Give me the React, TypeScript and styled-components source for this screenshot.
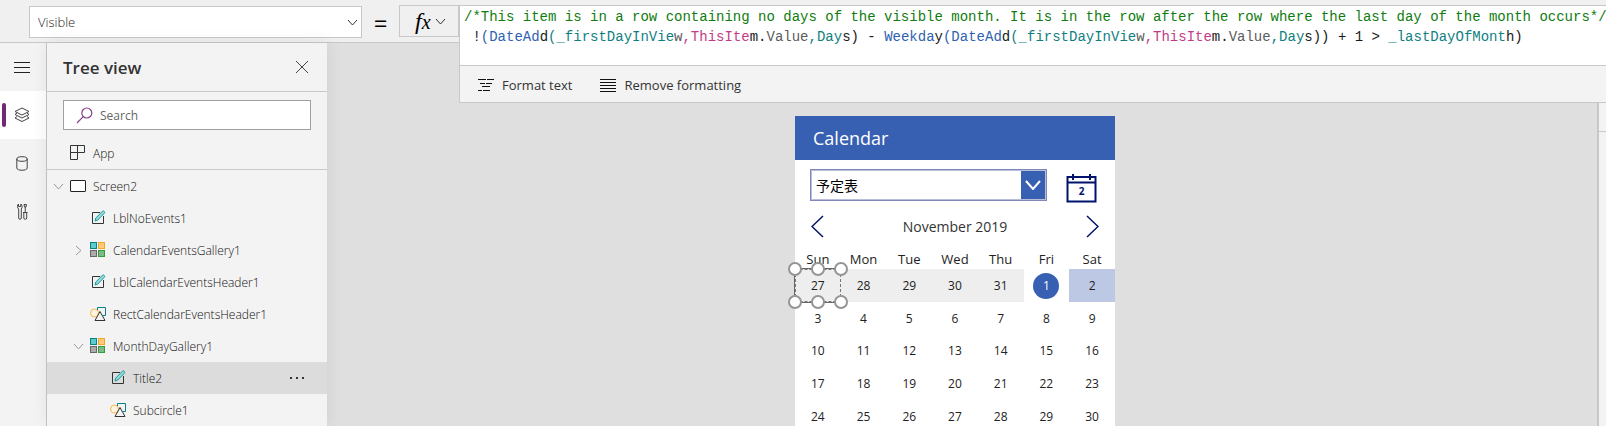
import React from "react";
import styled, { createGlobalStyle, css } from "styled-components";

const uiFont = '"Open Sans", "Noto Sans", sans-serif';
const appFont = '"Open Sans", "Noto Sans CJK JP", sans-serif';
const codeFont = '"Liberation Mono", monospace';

const line = "#c8c8c8";
const navy = "#00126b";
const blue = "#3860b2";

const GlobalStyle = createGlobalStyle`
  *, *::before, *::after { box-sizing: border-box; }
  body { margin: 0; font-family: ${uiFont}; color: #333; background: #f3f3f3; }
  button, input, select { font: inherit; color: inherit; margin: 0; }
  button { background: none; border: 0; padding: 0; cursor: pointer; }
  ul { list-style: none; margin: 0; padding: 0; }
  svg { display: block; flex: none; }
`;

const Studio = styled.div`
  display: flex;
  flex-direction: column;
  height: 100vh;
  overflow: hidden;
`;

/* ---------- formula bar ---------- */

const FormulaBar = styled.header`
  display: flex;
  align-items: flex-start;
  flex: none;
  height: 43px;
  padding-left: 29px;
  background: #f0f0f0;
  border-bottom: 1px solid ${line};
`;

const PropertyPicker = styled.label`
  display: grid;
  align-items: center;
  width: 333px;
  height: 32px;
  margin-top: 6px;
  background: #fff;
  border: 1px solid ${line};

  > * { grid-area: 1 / 1; }
  > svg { justify-self: end; margin-right: 3px; pointer-events: none; }
`;

const PropertySelect = styled.select`
  appearance: none;
  width: 100%;
  height: 100%;
  padding: 0 24px 0 8px;
  border: 0;
  background: transparent;
  font-size: 13px;
  font-weight: 300;
  color: #222;
`;

const Equals = styled.span`
  width: 37px;
  margin-top: 6px;
  text-align: center;
  font-size: 24px;
  line-height: 34px;
  color: #000;
`;

const FxButton = styled.button`
  display: flex;
  align-items: center;
  gap: 4px;
  width: 60px;
  height: 32px;
  margin-top: 5px;
  padding-left: 15px;
  border: 1px solid ${line};
`;

const Fx = styled.span`
  font: italic 24px/28px "Liberation Serif", serif;
  color: #000;

  small { font-size: 20px; }
`;

const EditorSlot = styled.div`
  position: relative;
  flex: 1;
  min-width: 0;
`;

const Editor = styled.section`
  position: absolute;
  z-index: 2;
  top: 5px;
  left: 0;
  right: 0;
  background: #fff;
  border: 1px solid ${line};
  border-right: 0;
`;

const Code = styled.div`
  height: 59px;
  padding: 1px 0 0 4px;
  overflow: hidden;
  white-space: pre;
  font-family: ${codeFont};
  font-size: 14px;
  line-height: 20px;
  color: #1a1a1a;
  outline: none;
`;

const tones = {
  comment: "#107c10",
  fn: "#2f62b0",
  variable: "#0f8080",
  item: "#c23b88",
  muted: "#5c5c5c",
  plain: "#1a1a1a",
};

const Token = styled.span<{ $tone: keyof typeof tones }>`
  color: ${(p) => tones[p.$tone]};
`;

const FormatBar = styled.div`
  display: flex;
  align-items: center;
  gap: 28px;
  height: 37px;
  padding: 2px 0 0 18px;
  background: #f3f3f3;
  border-top: 1px solid ${line};
`;

const FormatButton = styled.button`
  display: flex;
  align-items: center;
  gap: 8px;
  font-size: 13px;
`;

/* ---------- left side ---------- */

const Body = styled.div`
  display: flex;
  flex: 1;
  min-height: 0;
`;

const Rail = styled.nav`
  flex: none;
  width: 47px;
  background: #f3f3f3;
  border-right: 1px solid ${line};
`;

const RailButton = styled.button<{ $active?: boolean }>`
  position: relative;
  display: flex;
  align-items: center;
  justify-content: center;
  width: 100%;
  height: 48px;
  padding-right: 2px;
  color: #333;

  ${(p) =>
    p.$active &&
    css`
      background: #fff;

      &::before {
        content: "";
        position: absolute;
        left: 2px;
        top: 12px;
        width: 4px;
        height: 24px;
        border-radius: 2px;
        background: #742774;
      }
    `}
`;

const Panel = styled.aside`
  flex: none;
  width: 280px;
  background: #f3f3f3;
  box-shadow: 0 0 16px rgba(0, 0, 0, 0.08);
  z-index: 1;
`;

const PanelHeader = styled.div`
  display: flex;
  align-items: center;
  justify-content: space-between;
  height: 49px;
  padding: 0 18px 0 16px;
  border-bottom: 1px solid ${line};
`;

const PanelTitle = styled.h2`
  margin: 0;
  padding-top: 2px;
  font-size: 17px;
  line-height: 24px;
  font-weight: 600;
`;

const SearchBox = styled.label`
  display: flex;
  align-items: center;
  gap: 7px;
  height: 30px;
  margin: 8px 16px 7px;
  padding-left: 12px;
  background: #fff;
  border: 1px solid #a0a0a0;
`;

const SearchInput = styled.input`
  flex: 1;
  min-width: 0;
  padding: 0;
  border: 0;
  outline: 0;
  background: none;
  font-size: 12px;

  &::placeholder { color: #666; opacity: 1; }
`;

const TreeRow = styled.li<{ $depth: number; $selected?: boolean; $ruled?: boolean }>`
  display: flex;
  align-items: center;
  height: ${(p) => (p.$ruled ? 33 : 32)}px;
  padding-left: ${(p) => p.$depth * 20 + 3}px;
  padding-right: 22px;
  background: ${(p) => (p.$selected ? "#dcdcdc" : "transparent")};
  border-bottom: ${(p) => (p.$ruled ? `1px solid ${line}` : "0")};
`;

const Twisty = styled.button`
  display: flex;
  align-items: center;
  justify-content: center;
  width: 16px;
  height: 16px;
`;

const TwistySpace = styled.span`
  width: 16px;
`;

const TreeItem = styled.button`
  display: flex;
  align-items: center;
  flex: 1;
  gap: 7px;
  padding-left: 4px;
  font-size: 12px;
  font-weight: 300;
  line-height: 20px;
  text-align: left;
  color: #111;
`;

const TreeName = styled.span`
  padding-top: 2px;
`;

/* ---------- canvas ---------- */

const Canvas = styled.main`
  flex: 1;
  display: flex;
  justify-content: center;
  min-width: 0;
  padding: 73px 14px 0 0;
  background: #dfdfdf;
  overflow: hidden;
`;

const Side = styled.aside`
  flex: none;
  width: 9px;
  background: #f3f3f3;
  border-left: 2px solid ${line};

  &::before {
    content: "";
    display: block;
    height: 89px;
    border-bottom: 1px solid ${line};
  }
`;

const Phone = styled.article`
  flex: none;
  width: 320px;
  height: 568px;
  background: #fff;
  font-family: ${appFont};
`;

const AppHeader = styled.h1`
  margin: 0;
  padding-left: 18px;
  font-size: 18px;
  font-weight: 500;
  line-height: 44px;
  color: #fff;
  background: ${blue};
`;

const PickerRow = styled.div`
  display: flex;
  align-items: flex-start;
  justify-content: space-between;
  padding: 9px 18px 0 15px;
`;

const CalendarPicker = styled.label`
  display: grid;
  align-items: stretch;
  width: 237px;
  height: 32px;
  border: 1px solid #7f88b8;
  outline: 1px solid #b9bedb;
  outline-offset: -2px;
  background: #fff;

  > * { grid-area: 1 / 1; }
`;

const CalendarSelect = styled.select`
  appearance: none;
  width: 100%;
  padding: 0 28px 0 5px;
  border: 0;
  background: transparent;
  font-size: 14px;
  color: #000;
`;

const PickerArrow = styled.span`
  justify-self: end;
  display: flex;
  align-items: center;
  justify-content: center;
  width: 24px;
  margin: 1px;
  background: ${blue};
  pointer-events: none;
`;

const TodayButton = styled.button`
  margin-top: 4px;
`;

const MonthRow = styled.div`
  display: flex;
  align-items: center;
  justify-content: space-between;
  height: 48px;
  padding: 0 16px 2px;
  font-size: 14px;
  color: #333;
`;

const MonthTable = styled.table`
  width: 100%;
  table-layout: fixed;
  border-collapse: collapse;
  text-align: center;

  th { height: 18px; padding: 0 0 2px; font-size: 13px; line-height: 16px; font-weight: 400; color: #222; }
  td { padding: 0; font-size: 12px; line-height: 18px; color: #222; }
  tbody tr { height: 33px; }
  tbody tr:nth-child(3n) { height: 32px; }
`;

const Day = styled.td<{ $kind?: "outside" | "today" | "selected" }>`
  position: relative;
  background: ${(p) => (p.$kind === "outside" ? "#eee" : p.$kind === "today" ? "#bcc8e4" : "transparent")};
`;

const Disc = styled.span`
  display: block;
  width: 26px;
  margin: 0 auto;
  border-radius: 13px;
  line-height: 26px;
  color: #fff;
  background: ${blue};
`;

const Selection = styled.span`
  position: absolute;
  inset: -1px;
  border: 1px solid #666;

  &::after {
    content: "";
    position: absolute;
    inset: 0;
    border: 1px dashed #777;
  }
`;

const Handle = styled.i<{ $x: number; $y: number }>`
  position: absolute;
  z-index: 1;
  left: ${(p) => p.$x}%;
  top: ${(p) => p.$y}%;
  width: 14px;
  height: 14px;
  margin: -7px;
  border: 2px solid #959595;
  border-radius: 50%;
  background: #fff;
`;

/* ---------- drawings ---------- */

const Chevron = ({ w, h, color, stroke = 1, dir = "down" }: { w: number; h: number; color: string; stroke?: number; dir?: "down" | "left" | "right" }) => {
  const d =
    dir === "down"
      ? `M1 1 L${w / 2} ${h - 1} L${w - 1} 1`
      : dir === "right"
        ? `M1 1 L${w - 1} ${h / 2} L1 ${h - 1}`
        : `M${w - 1} 1 L1 ${h / 2} L${w - 1} ${h - 1}`;
  return (
    <svg width={w} height={h} fill="none" stroke={color} strokeWidth={stroke}>
      <path d={d} />
    </svg>
  );
};

const MenuIcon = () => (
  <svg width="16" height="11" stroke="#222"><path d="M0 .5H16M0 5.500H16M0 10.500H16" /></svg>
);
const LayersIcon = () => (
  <svg width="16" height="16" viewBox="0 0 16 16" fill="none" stroke="#444">
    <path d="M8 1 15 4.5 8 8 1 4.5Z" />
    <path d="M3 6 1 7.5 8 11 15 7.5 13 6" />
    <path d="M3 9.5 1 11 8 14.5 15 11 13 9.5" />
  </svg>
);
const DataIcon = () => (
  <svg width="12" height="15" viewBox="0 0 12 15" fill="none" stroke="#444">
    <ellipse cx="6" cy="3" rx="5.2" ry="2.3" />
    <path d="M.8 3V12C.8 15 11.2 15 11.2 12V3" />
  </svg>
);
const ToolsIcon = () => (
  <svg width="11" height="17" viewBox="0 0 11 17" fill="none" stroke="#444">
    <path d="M1.500 1V3.500H3.800V1C5.500 2 5.300 5 4.300 6V15C4.300 16.800 1.700 16.800 1.700 15V6C0 5 0 2 1.500 1Z" />
    <path d="M7 1.500H9.500L9 4H7.500ZM8.250 4V9M6 9.500H10.500M6.800 9.500V15C6.800 16.800 9.700 16.800 9.700 15V9.500" />
  </svg>
);
const CloseIcon = () => (
  <svg width="14" height="14" stroke="#444"><path d="M1 1 13 13M13 1 1 13" /></svg>
);
const SearchIcon = () => (
  <svg width="17" height="17" viewBox="0 0 17 17" fill="none" stroke="#8a3f8a" strokeWidth="1.2">
    <circle cx="10.800" cy="6" r="5" /><path d="M7.200 9.700 1 16" />
  </svg>
);
const AppIcon = () => (
  <svg width="16" height="16" fill="none" stroke="#333"><path d="M.5 .5H14.500V7.500H7.500V14.500H.5ZM7.500 .5V7.500H.5" /></svg>
);
const ScreenIcon = () => (
  <svg width="16" height="12" fill="#fff" stroke="#222"><rect x=".5" y=".5" width="15" height="11" rx=".5" /></svg>
);
const LabelIcon = () => (
  <svg width="16" height="16" viewBox="0 0 16 16" fill="none">
    <path d="M10 2.500H2.500V13.500H13.500V6" stroke="#333" />
    <path d="M5 11 5.800 8 12.500 1.200C13.500 .2 15.500 2 14.300 3.200L7.800 10Z" fill="#9ddada" stroke="#0f9a9a" />
  </svg>
);
const GalleryIcon = () => (
  <svg width="16" height="16">
    <rect x=".5" y=".5" width="6" height="6" fill="#5fcaca" stroke="#038387" />
    <rect x="8.500" y=".5" width="6" height="6" fill="#fccb7c" stroke="#f5a623" />
    <rect x=".5" y="8.500" width="6" height="6" fill="#acacac" stroke="#666" />
    <rect x="8.500" y="8.500" width="6" height="6" fill="#7cbc84" stroke="#359a40" />
  </svg>
);
const ShapeIcon = () => (
  <svg width="16" height="16" fill="none">
    <circle cx="4.500" cy="7" r="4" stroke="#f7b54a" fill="#fff5e2" />
    <path d="M7.500 4V1.500H15.500V9.500H13" stroke="#038387" />
    <path d="M10 5.500 15 14.500H5Z" stroke="#333" fill="#f3f3f3" />
  </svg>
);
const FormatIcon = () => (
  <svg width="16" height="12" stroke="#111"><path d="M0 .5H8M9 .5H16M2 4.500H7M8 4.500H14M4 7.500H12M0 11.500H4M5 11.500H12" /></svg>
);
const RemoveIcon = () => (
  <svg width="16" height="13" stroke="#111"><path d="M0 .5H16M0 3.500H16M0 6.500H16M0 9.500H16M0 12.500H16" /></svg>
);
const MoreIcon = () => (
  <svg width="16" height="3" fill="#333"><path d="M1 0h2v2H1zM7 0h2v2H7zM13 0h2v2H13z" /></svg>
);
const TodayIcon = () => (
  <svg width="31" height="30" viewBox="0 0 31 30" fill="none" stroke={navy} strokeWidth="2">
    <rect x="1.500" y="4" width="28" height="24.500" />
    <path d="M1 9.500H30M7 1V7M24 1V7" />
    <text x="15.500" y="22" textAnchor="middle" fontSize="10" fontWeight="700" fill={navy} stroke="none">2</text>
  </svg>
);

/* ---------- content ---------- */

type Tone = keyof typeof tones;

const dateAdd: [Tone, string][] = [
  ["fn", "(DateAd"], ["plain", "d"], ["variable", "(_firstDayInVie"], ["muted", "w"],
  ["item", ",ThisIte"], ["plain", "m."], ["muted", "Value"], ["variable", ",Day"],
];

const formula: [Tone, string][] = [
  ["plain", " !"], ...dateAdd, ["plain", "s) - "], ["fn", "Weekda"], ["plain", "y"],
  ...dateAdd, ["plain", "s)) + 1 > "], ["variable", "_lastDayOfMont"], ["plain", "h)"],
];

const tree = [
  { name: "App", icon: <AppIcon />, depth: 0, ruled: true },
  { name: "Screen2", icon: <ScreenIcon />, depth: 0, open: true },
  { name: "LblNoEvents1", icon: <LabelIcon />, depth: 1 },
  { name: "CalendarEventsGallery1", icon: <GalleryIcon />, depth: 1, open: false },
  { name: "LblCalendarEventsHeader1", icon: <LabelIcon />, depth: 1 },
  { name: "RectCalendarEventsHeader1", icon: <ShapeIcon />, depth: 1 },
  { name: "MonthDayGallery1", icon: <GalleryIcon />, depth: 1, open: true },
  { name: "Title2", icon: <LabelIcon />, depth: 2, selected: true },
  { name: "Subcircle1", icon: <ShapeIcon />, depth: 2 },
];

const weekdays = ["Sun", "Mon", "Tue", "Wed", "Thu", "Fri", "Sat"];
const weeks = [
  [27, 28, 29, 30, 31, 1, 2],
  [3, 4, 5, 6, 7, 8, 9],
  [10, 11, 12, 13, 14, 15, 16],
  [17, 18, 19, 20, 21, 22, 23],
  [24, 25, 26, 27, 28, 29, 30],
];
const handles = [[0, 0], [50, 0], [100, 0], [0, 100], [50, 100], [100, 100]];

const dayKind = (week: number, day: number) =>
  week > 0 ? undefined : day > 20 ? "outside" : day === 1 ? "selected" : "today";

export default function App() {
  return (
    <Studio>
      <GlobalStyle />
      <FormulaBar>
        <PropertyPicker>
          <PropertySelect aria-label="Property"><option>Visible</option></PropertySelect>
          <Chevron w={11} h={7} color="#333" />
        </PropertyPicker>
        <Equals>=</Equals>
        <FxButton aria-label="Insert function">
          <Fx>f<small>x</small></Fx>
          <Chevron w={11} h={7} color="#333" />
        </FxButton>
        <EditorSlot>
          <Editor>
            <Code role="textbox" aria-label="Formula" aria-multiline contentEditable suppressContentEditableWarning spellCheck={false}>
              <div>
                <Token $tone="comment">
                  /*This item is in a row containing no days of the visible month. It is in the row after the row where the last day of the month occurs*/
                </Token>
              </div>
              <div>
                {formula.map(([tone, text], i) => <Token key={i} $tone={tone}>{text}</Token>)}
              </div>
            </Code>
            <FormatBar>
              <FormatButton><FormatIcon />Format text</FormatButton>
              <FormatButton><RemoveIcon />Remove formatting</FormatButton>
            </FormatBar>
          </Editor>
        </EditorSlot>
      </FormulaBar>

      <Body>
        <Rail>
          <RailButton aria-label="Menu"><MenuIcon /></RailButton>
          <RailButton aria-label="Tree view" $active><LayersIcon /></RailButton>
          <RailButton aria-label="Data"><DataIcon /></RailButton>
          <RailButton aria-label="Advanced tools"><ToolsIcon /></RailButton>
        </Rail>

        <Panel>
          <PanelHeader>
            <PanelTitle>Tree view</PanelTitle>
            <button aria-label="Close"><CloseIcon /></button>
          </PanelHeader>
          <SearchBox>
            <SearchIcon />
            <SearchInput type="text" placeholder="Search" aria-label="Search" />
          </SearchBox>
          <ul>
            {tree.map((t) => (
              <TreeRow key={t.name} $depth={t.depth} $selected={t.selected} $ruled={t.ruled}>
                {t.open === undefined ? <TwistySpace /> : (
                  <Twisty aria-label="Toggle" aria-expanded={t.open}>
                    {t.open ? <Chevron w={11} h={7} color="#999" /> : <Chevron w={7} h={11} color="#999" dir="right" />}
                  </Twisty>
                )}
                <TreeItem>{t.icon}<TreeName>{t.name}</TreeName></TreeItem>
                {t.selected && <button aria-label="More"><MoreIcon /></button>}
              </TreeRow>
            ))}
          </ul>
        </Panel>

        <Canvas>
          <Phone>
            <AppHeader>Calendar</AppHeader>
            <PickerRow>
              <CalendarPicker>
                <CalendarSelect aria-label="Calendar"><option>予定表</option></CalendarSelect>
                <PickerArrow><Chevron w={16} h={10} color="#fff" stroke={2} /></PickerArrow>
              </CalendarPicker>
              <TodayButton aria-label="Today"><TodayIcon /></TodayButton>
            </PickerRow>
            <MonthRow>
              <button aria-label="Previous month"><Chevron w={13} h={23} color={navy} dir="left" stroke={1.5} /></button>
              <span>November 2019</span>
              <button aria-label="Next month"><Chevron w={13} h={23} color={navy} dir="right" stroke={1.5} /></button>
            </MonthRow>
            <MonthTable>
              <thead>
                <tr>{weekdays.map((d) => <th key={d} scope="col">{d}</th>)}</tr>
              </thead>
              <tbody>
                {weeks.map((week, w) => (
                  <tr key={w}>
                    {week.map((day) => {
                      const kind = dayKind(w, day);
                      return (
                        <Day key={day} $kind={kind}>
                          {kind === "selected" ? <Disc>{day}</Disc> : day}
                          {w === 0 && day === 27 && (
                            <Selection>
                              {handles.map(([x, y]) => <Handle key={`${x}-${y}`} $x={x} $y={y} />)}
                            </Selection>
                          )}
                        </Day>
                      );
                    })}
                  </tr>
                ))}
              </tbody>
            </MonthTable>
          </Phone>
        </Canvas>
        <Side />
      </Body>
    </Studio>
  );
}
